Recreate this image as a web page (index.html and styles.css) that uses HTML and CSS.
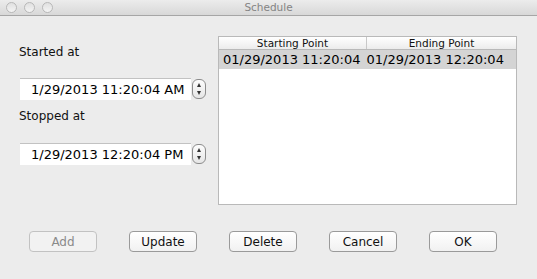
FILE: index.html
```html
<!DOCTYPE html>
<html lang="en">
<head>
  <meta charset="UTF-8" />
  <title>Schedule</title>
  <link rel="stylesheet" href="styles.css">
</head>
<body>
  <div class="window">
    <div class="titlebar">
      <div class="lights">
        <span class="light"></span>
        <span class="light"></span>
        <span class="light"></span>
      </div>
      <div class="title">Schedule</div>
    </div>

    <div class="content">
      <div class="left">
        <div class="label label-first">Started at</div>
        <div class="field-row">
          <div class="field">1/29/2013 11:20:04 AM</div>
          <div class="spinner"><span class="up"></span><span class="down"></span></div>
        </div>
        <div class="label label-second">Stopped at</div>
        <div class="field-row field-row-second">
          <div class="field">1/29/2013 12:20:04 PM</div>
          <div class="spinner"><span class="up"></span><span class="down"></span></div>
        </div>
      </div>

      <div class="table">
        <div class="thead">
          <div class="th th-first">Starting Point</div>
          <div class="th">Ending Point</div>
        </div>
        <div class="tr selected">
          <div class="td">01/29/2013 11:20:04</div>
          <div class="td">01/29/2013 12:20:04</div>
        </div>
      </div>
    </div>

    <div class="buttons">
      <button class="btn" disabled>Add</button>
      <button class="btn">Update</button>
      <button class="btn">Delete</button>
      <button class="btn">Cancel</button>
      <button class="btn">OK</button>
    </div>
  </div>
</body>
</html>
```

FILE: styles.css
```css
body {
  margin: 0;
  font-family: "DejaVu Sans", sans-serif;
  background: #ececec;
}

.window {
  width: 537px;
  height: 279px;
  background: #ececec;
  overflow: hidden;
}

.titlebar {
  height: 15px;
  position: relative;
  background: linear-gradient(#ececec, #d8d8d8);
  border-bottom: 1px solid #a6a6a6;
}

.lights {
  display: flex;
  gap: 7px;
  padding: 2px 0 0 6px;
}

.light {
  width: 9px;
  height: 9px;
  border-radius: 50%;
  border: 1px solid #b8b8b8;
  background: linear-gradient(#e0e0e0, #f4f4f4);
}

.title {
  position: absolute;
  top: 0;
  left: 0;
  right: 0;
  text-align: center;
  font-size: 10.5px;
  line-height: 15px;
  color: #848484;
}

.content {
  display: flex;
  padding: 20px 0 0 19px;
}

.left {
  width: 199px;
}

.label {
  font-size: 12px;
  line-height: 15px;
  color: #111;
}

.label-first {
  margin-top: 9px;
}

.label-second {
  margin-top: 9px;
}

.field-row {
  display: flex;
  align-items: center;
  margin-top: 18px;
}

.field-row-second {
  margin-top: 19px;
}

.field {
  width: 160px;
  height: 21px;
  margin-left: 1px;
  padding-left: 11px;
  box-sizing: content-box;
  background: #fff;
  border-top: 1px solid #c2c2c2;
  font-size: 13px;
  line-height: 22px;
  color: #000;
  white-space: nowrap;
}

.spinner {
  width: 12px;
  height: 18px;
  margin-left: 1px;
  border: 1px solid #8c8c8c;
  border-radius: 6px;
  background: linear-gradient(#fdfdfd, #e6e6e6);
  display: flex;
  flex-direction: column;
  align-items: center;
  justify-content: center;
  gap: 4px;
}

.up {
  width: 0;
  height: 0;
  border-left: 2.5px solid transparent;
  border-right: 2.5px solid transparent;
  border-bottom: 4px solid #333;
}

.down {
  width: 0;
  height: 0;
  border-left: 2.5px solid transparent;
  border-right: 2.5px solid transparent;
  border-top: 4px solid #333;
}

.table {
  width: 297px;
  height: 167px;
  background: #fff;
  border: 1px solid #b9b9b9;
}

.thead {
  display: flex;
  height: 12px;
  background: linear-gradient(#ffffff, #ececec);
  border-bottom: 1px solid #b9b9b9;
}

.th {
  flex: 1;
  text-align: center;
  font-size: 10.5px;
  line-height: 12px;
  color: #111;
}

.th-first {
  flex: none;
  width: 147px;
  border-right: 1px solid #c8c8c8;
}

.tr {
  display: flex;
  height: 19px;
}

.selected {
  background: #d4d4d4;
}

.td {
  font-size: 13px;
  line-height: 19px;
  color: #000;
  padding-left: 4px;
  white-space: nowrap;
}

.td + .td {
  padding-left: 6px;
}

.buttons {
  display: flex;
  gap: 32px;
  padding: 26px 0 0 29px;
}

.btn {
  width: 68px;
  height: 21px;
  padding: 0;
  border: 1px solid #9a9a9a;
  border-radius: 4px;
  background: linear-gradient(#ffffff, #f1f1f1);
  font-family: "DejaVu Sans", sans-serif;
  font-size: 12px;
  color: #111;
}

.btn:disabled {
  border-color: #c2c2c2;
  color: #8a8a8a;
  background: #f2f2f2;
}
```
